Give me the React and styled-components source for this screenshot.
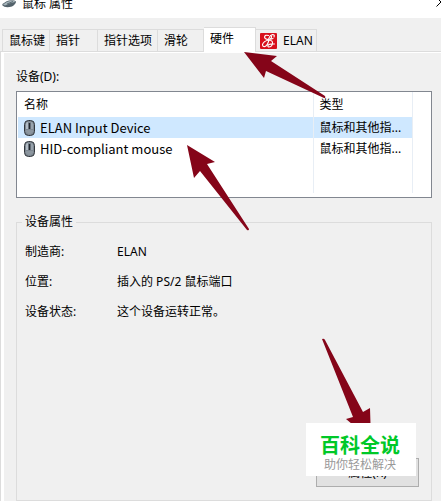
import styled, { createGlobalStyle } from "styled-components";
import { useState } from "react";

const GlobalStyle = createGlobalStyle`
  * {
    box-sizing: border-box;
  }
  body {
    margin: 0;
    background-color: #f0f0f0;
    color: #000;
    font-family: "Noto Sans", "Noto Sans CJK SC", sans-serif;
    font-size: 12px;
    line-height: 18px;
  }
  button {
    font: inherit;
    color: inherit;
  }
`;
const Window = styled.main`
  position: relative;
  overflow: hidden;
`;
const TitleBar = styled.header`
  display: flex;
  justify-content: space-between;
  height: 18px;
  background-color: #fff;
`;
const Title = styled.h1`
  display: flex;
  align-items: center;
  gap: 6px;
  height: 8px;
  margin: 0;
  padding-left: 2px;
  font-size: 12px;
  font-weight: 400;
`;
const CloseButton = styled.button`
  width: 10px;
  height: 10px;
  margin: -3px -5px 0 0;
  padding: 0;
  border: none;
  background: none;
  line-height: 0;
`;
const TabList = styled.div`
  display: flex;
  align-items: flex-end;
  height: 33px;
  padding-left: 2px;
`;
const Tab = styled.button`
  display: flex;
  align-items: center;
  gap: 6px;
  width: ${(props) => props.$width}px;
  height: ${(props) => (props.$active ? 25 : 22)}px;
  margin-bottom: ${(props) => (props.$active ? -1 : 0)}px;
  padding: 0 0 ${(props) => (props.$active ? 3 : 0)}px ${(props) => (props.$icon ? 4 : 6)}px;
  border: 1px solid #dcdcdc;
  border-width: 1px 1px 0 0;
  background-color: ${(props) => (props.$active ? "#fff" : "#f0f0f0")};
  white-space: nowrap;

  &:first-child {
    border-left-width: 1px;
  }
`;
const Pane = styled.section`
  padding: 16px 9px 0 15px;
  border-top: 1px solid #dcdcdc;
  border-left: 1px solid #dcdcdc;
  box-shadow: inset 3px 1px #fff;
`;
const ListLabel = styled.div`
  margin-bottom: 5px;
`;
const ListBox = styled.div`
  height: 107px;
  padding: 0 1px;
  border: 1px solid #828790;
  background-color: #fff;
`;
const Table = styled.table`
  width: 100%;
  table-layout: fixed;
  border-collapse: collapse;
`;
const Th = styled.th`
  width: ${(props) => (props.$width ? `${props.$width}px` : "auto")};
  height: 25px;
  padding: 0 6px;
  border-right: 1px solid #e8eef5;
  font-weight: 400;
  text-align: left;

  &:last-child {
    border-right: none;
  }
`;
const Td = styled.td`
  height: 21px;
  padding: 0 6px;
  border-right: 1px solid #e8eef5;
  background-color: ${(props) => (props.$selected ? "#cfe8ff" : "#fff")};
  white-space: nowrap;

  &:last-child {
    border-right: none;
    background-color: #fff;
  }
`;
const Filler = styled(Td)`
  height: 34px;
`;
const Device = styled.span`
  display: flex;
  align-items: center;
  gap: 5px;
  font-family: "Noto Sans CJK SC", sans-serif;
  font-size: 13px;
`;
const Group = styled.fieldset`
  margin: 15px 0 0;
  padding: 6px 12px 13px 8px;
  border: 1px solid #dcdcdc;
`;
const Legend = styled.legend`
  margin-left: -3px;
  padding: 0 3px;
`;
const Details = styled.dl`
  display: grid;
  grid-template-columns: 92px 1fr;
  margin: 0;
  line-height: 30px;
`;
const Term = styled.dt``;
const Value = styled.dd`
  margin: 0;
`;
const Actions = styled.div`
  display: flex;
  justify-content: flex-end;
  margin-top: 131px;
`;
const Button = styled.button`
  width: 103px;
  height: 29px;
  padding: 0;
  border: 1px solid #adadad;
  background-color: #e1e1e1;
`;
const Arrows = styled.svg`
  position: absolute;
  top: 0;
  left: 0;
  pointer-events: none;
`;
const Watermark = styled.aside`
  position: absolute;
  right: 25px;
  bottom: 25px;
  width: 110px;
  padding: 10px 2px 3px 0;
  background-color: #fff;
  text-align: center;
`;
const Brand = styled.div`
  color: #00c828;
  font-family: "Noto Sans CJK SC", sans-serif;
  font-size: 20px;
  font-weight: 700;
  line-height: 23px;
`;
const Slogan = styled.div`
  color: #999;
  line-height: 17px;
`;

const tabs = [
  { name: "鼠标键", width: 48 },
  { name: "指针", width: 48 },
  { name: "指针选项", width: 60 },
  { name: "滑轮", width: 46 },
  { name: "硬件", width: 52 },
  { name: "ELAN", width: 61, icon: true },
];

const devices = [
  { name: "ELAN Input Device", type: "鼠标和其他指..." },
  { name: "HID-compliant mouse", type: "鼠标和其他指..." },
];

const properties = [
  { label: "制造商:", value: "ELAN" },
  { label: "位置:", value: "插入的 PS/2 鼠标端口" },
  { label: "设备状态:", value: "这个设备运转正常。" },
];

function TitleIcon() {
  return (
    <svg width="14" height="10" viewBox="0 0 14 10">
      <path d="M0 6 Q2 3 7 1.5 Q12 0.500 14 2.500 Q14 5 10 7.500 Q3 9.500 0 6Z" fill="#53626b" />
      <path d="M1 5.500 Q5 2 10 1.5 Q13 1.5 13 3 Q8 3.500 3 6.500Z" fill="#a5b3b9" />
      <path d="M5 5 L11 2.500" stroke="#5b6a72" />
    </svg>
  );
}

function MouseIcon() {
  return (
    <svg width="11" height="16" viewBox="0 0 11 16">
      <rect x="0.5" y="0.5" width="10" height="15" rx="4" fill="#7d8791" stroke="#32373d" />
      <path d="M2 4 Q2 2 4 2 V9 H2Z" fill="#b3bdc6" />
      <path d="M7 2 Q9 2 9 4 V9 H7Z" fill="#98a3ad" />
      <path d="M2 10 H9 V12 Q8 14 5.5 14 Q3 14 2 12Z" fill="#8c969f" />
      <path d="M5.5 3 V9" stroke="#20262c" strokeWidth="1.5" />
    </svg>
  );
}

function ElanIcon() {
  return (
    <svg width="17" height="16" viewBox="0 0 17 16">
      <rect width="17" height="16" rx="1" fill="#d8101c" />
      <path
        d="M14 4 Q15 1.5 12.500 1.5 Q10 2 9 5 Q8 7 9.500 6.500 Q12 5 11.500 3 M8.500 2.500 Q5 1.5 4.500 4 Q4.500 6 8 6.500 Q11 6.500 13 5.500 M9 7 Q3.500 8 2.500 11.500 Q2.500 14 5 13.500 Q7.500 12.500 9 7 M9 7 Q13 7.500 12.500 10.500 Q12 14 8.500 14 Q7 13 9 11.500 Q11 10.500 14.500 11"
        fill="none"
        stroke="#fff"
        strokeWidth="1.1"
        strokeLinecap="round"
      />
    </svg>
  );
}

export default function App() {
  const [activeTab, setActiveTab] = useState("硬件");
  const [selected, setSelected] = useState(0);

  return (
    <>
      <GlobalStyle />
      <Window>
        <TitleBar>
          <Title>
            <TitleIcon />
            鼠标 属性
          </Title>
          <CloseButton aria-label="关闭">
            <svg width="10" height="10" viewBox="0 0 10 10">
              <path d="M0.5 0.5 L9.5 9.5 M9.5 0.5 L0.5 9.5" stroke="#000" />
            </svg>
          </CloseButton>
        </TitleBar>
        <TabList role="tablist">
          {tabs.map((tab) => (
            <Tab
              key={tab.name}
              role="tab"
              aria-selected={tab.name === activeTab}
              $active={tab.name === activeTab}
              $width={tab.width}
              $icon={tab.icon}
              onClick={() => setActiveTab(tab.name)}
            >
              {tab.icon && <ElanIcon />}
              {tab.name}
            </Tab>
          ))}
        </TabList>
        <Pane role="tabpanel">
          <ListLabel id="devices">设备(D):</ListLabel>
          <ListBox>
            <Table aria-labelledby="devices">
              <thead>
                <tr>
                  <Th>名称</Th>
                  <Th $width={99}>类型</Th>
                  <Th $width={18} aria-hidden="true" />
                </tr>
              </thead>
              <tbody>
                {devices.map((device, index) => (
                  <tr key={index} onClick={() => setSelected(index)}>
                    <Td $selected={index === selected}>
                      <Device>
                        <MouseIcon />
                        {device.name}
                      </Device>
                    </Td>
                    <Td $selected={index === selected}>{device.type}</Td>
                    <Td />
                  </tr>
                ))}
                <tr aria-hidden="true">
                  <Filler />
                  <Filler />
                  <Filler />
                </tr>
              </tbody>
            </Table>
          </ListBox>
          <Group>
            <Legend>设备属性</Legend>
            <Details>
              {properties.map((item) => [
                <Term key={`${item.label}-term`}>{item.label}</Term>,
                <Value key={`${item.label}-value`}>{item.value}</Value>,
              ])}
            </Details>
            <Actions>
              <Button>属性(R)</Button>
            </Actions>
          </Group>
        </Pane>
        <Arrows width="441" height="501" viewBox="0 0 441 501" fill="#850519" aria-hidden="true">
          <path d="M244 52 L277 56 L271 61 L325 96 Q326 98 324 98 L266 71 L264 78Z" />
          <path d="M187 145 L215 162 L207 164 L249 229 Q249 231 247 230 L200 171 L194 178Z" />
          <path d="M322 339 Q324 338 325 340 L363 412 L370 408 L371 440 L346 419 L353 417Z" />
        </Arrows>
        <Watermark>
          <Brand>百科全说</Brand>
          <Slogan>助你轻松解决</Slogan>
        </Watermark>
      </Window>
    </>
  );
}
